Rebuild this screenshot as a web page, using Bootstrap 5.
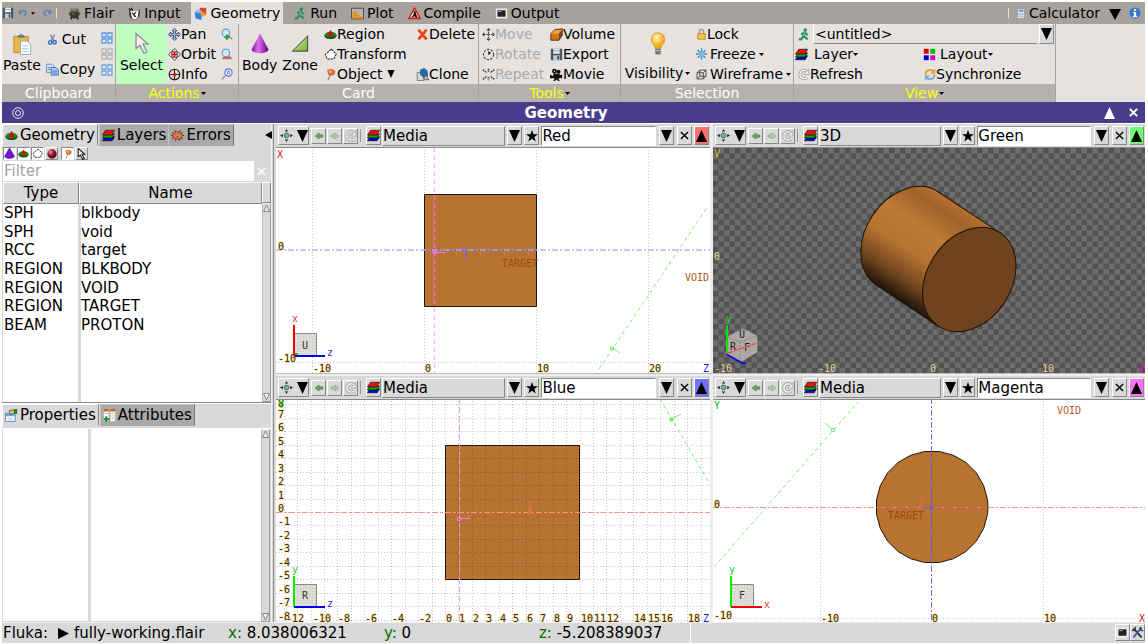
<!DOCTYPE html>
<html lang="en">
<head>
<meta charset="utf-8">
<meta name="viewport" content="width=device-width, initial-scale=1">
<title>Flair - Geometry</title>
<link href="https://cdn.jsdelivr.net/npm/bootstrap@5.3.0/dist/css/bootstrap.min.css" rel="stylesheet">
<style>
body{font-family:"DejaVu Sans",sans-serif;font-size:14px;line-height:20px;color:#000;background:#fff}
button,select,input{font:inherit;color:inherit;border-radius:0}
button{padding:0;border:0;background:transparent;white-space:nowrap;display:flex;align-items:center}
svg{display:block;flex:none}
.app{padding:2px 3px 1px 2px;height:100vh;min-height:480px;overflow:hidden}
.ic{width:13px;height:13px}
.menubar{background:#a6a29e;height:22px}
.menubar .tab{height:22px;padding:0 3px;gap:3px}
.menubar .tab.active{background:#e5e2e0}
.sep{width:1px;height:10px;background:#e5e2e0}
.ribbon{background:#e5e2e0;height:78px}
.grp{border-right:1px solid #a6a29e}
.grp-body{height:60px}
.grp-name{height:18px;background:#b5b1ad;color:#fff;line-height:19px;gap:1px;width:100%;justify-content:center}
.grp-name.menu{color:#ff0}
.g-clip{width:114px}.g-act{width:123px}.g-card{width:240px}.g-tool{width:142px}.g-sel{width:173px}.g-view{width:262px}
.big{flex-direction:column;justify-content:flex-start;padding-top:8px;line-height:20px}
.big>svg{height:23px}
.colm{display:flex;flex-direction:column}
.colm button{height:20px}
.two button{height:30px;gap:3px}
.off{color:#aaa}
.caret{width:5px;height:3px}
.tri{width:11px;height:12px}
.titlebar{background:#483d8b;color:#fff;height:21px;font-size:15px}
.sheet{background:#d9d9d9}
.side{width:270px;font-size:15px;border-right:1px solid #f4f4f4}
.stabs{height:23px}
.stabs button{height:22px;padding:0 2px;gap:2px;background:#a9a9a9;border:1px solid;border-color:#c4c4c4 #777 transparent #c4c4c4;margin-right:-1px}
.stabs button.active{background:#d9d9d9;border-color:#fff #888 transparent #fff;margin-right:1px}
.raise{background:#d9d9d9;border:1px solid;border-color:#fff #888 #888 #fff;justify-content:center}
.mini{width:13px;height:13px}
.mini.on{background:#fff;border-color:#888 #fff #fff #888}
.filter{height:20px;background:#fff;margin:1px 2px 1px 1px}
.filter input{border:0;padding:0 0 0 1px;outline:0;height:20px;line-height:20px}
.filter input::placeholder{color:#a3a3a3;opacity:1}
.filter button{width:15px;background:#d9d9d9;justify-content:center}
.listbox{background:linear-gradient(to right,transparent 75px,#d9d9d9 75px,#d9d9d9 78px,transparent 78px) #fff;margin-left:1px}
.cards{width:100%;height:152px;border-collapse:separate;border-spacing:0;table-layout:fixed}
.cards th{height:22px;font-weight:400;text-align:center;background:#d9d9d9;border:1px solid;border-color:#f8f8f8 #888 #888 #f8f8f8;padding:0;line-height:19px}
.cards td{padding:0 0 0 1px;line-height:18px}
.cards th:first-child,.cards td:first-child{width:76px}
.cards td:last-child{padding-left:2px}
.props{background:linear-gradient(to right,transparent 85px,#d9d9d9 85px,#d9d9d9 88px,transparent 88px) #fff;margin:0 0 1px 1px}
.sbar{width:9px;background:#d9d9d9;border:1px solid;border-color:#eee #999 #999 #bbb}
.sash{width:4px;background:linear-gradient(to right,#d9d9d9 1px,#8c8c8c 1px,#8c8c8c 2px,#d9d9d9 2px)}
.views{display:grid;grid-template-columns:434fr 432fr;grid-template-rows:249fr 246fr;column-gap:3px;row-gap:3px;background:linear-gradient(#bbb,#bbb) center/100% 1px no-repeat #eee;font-size:15px}
.pane{min-height:0;min-width:0}
.vbar{height:24px;background:#d9d9d9;border-bottom:1px solid #888;padding:0 1px 0 2px}
.vbar>.raise{width:15px;height:19px;margin-right:2px}
.vbar>.raise.small2{height:16px;width:15px;margin-right:1px}
.vbar .nav2{width:31px;gap:4px}
.vbar select{appearance:none;flex:125 1 0;min-width:0;height:20px;line-height:18px;background:#d9d9d9;border:1px solid;border-color:#fff #888 #888 #fff;padding:0;outline:0;margin-right:2px}
.vbar input{flex:116 1 0;min-width:0;height:20px;border:1px solid;border-color:#888 #fff #fff #888;padding:0;outline:0;background:#fff;margin-right:3px}
.plot{width:100%;flex:1 1 0;min-height:0}
.plot text{font:10px "DejaVu Sans Mono",monospace}
.ax text,text.ax{fill:#3c2c00;stroke:#f7dc96;stroke-width:1px;paint-order:stroke}
.axd text{fill:#e8cf96}
.dot{stroke:#c4c4c4;stroke-dasharray:1 2;fill:none}
.status{background:#d9d9d9;height:21px;font-size:15px;line-height:21px;border-top:1px solid #eee}
.status .lab{color:#007000}
.s1{width:226px}.s2{width:156px}.s3{width:155px}.s4{width:152px;border-right:1px solid #fff}
.viewname{border:0;outline:0;background:#e5e2e0;border-bottom:1px solid #888;border-left:1px solid #fff;width:226px;height:20px;padding:0 0 0 1px}
</style>
</head>
<body>
<svg width="0" height="0" class="position-absolute" aria-hidden="true">
<defs>
<linearGradient id="cone" x1="0" x2="1"><stop offset="0" stop-color="#7a10a0"/><stop offset=".4" stop-color="#e070f0"/><stop offset="1" stop-color="#600878"/></linearGradient>
<linearGradient id="zn" x1="0" x2="1" y2="1"><stop offset="0" stop-color="#e0f0b0"/><stop offset="1" stop-color="#70b030"/></linearGradient>
<radialGradient id="blb" cx=".4" cy=".3"><stop offset="0" stop-color="#fff8c0"/><stop offset="1" stop-color="#f4b020"/></radialGradient>
<radialGradient id="sphr" cx=".35" cy=".3"><stop offset="0" stop-color="#ffb0b0"/><stop offset=".5" stop-color="#b02840"/><stop offset="1" stop-color="#601020"/></radialGradient>
<linearGradient id="cyl" x1="0" x2="0" y2="1"><stop offset="0" stop-color="#b8702f"/><stop offset=".12" stop-color="#a0632b"/><stop offset=".35" stop-color="#c07a36"/><stop offset=".58" stop-color="#b87333"/><stop offset=".82" stop-color="#70461f"/><stop offset="1" stop-color="#20140a"/></linearGradient>
<pattern id="chk" x="713" y="148" width="11" height="11" patternUnits="userSpaceOnUse"><path fill="#6c6c6c" d="M0 0h11v11H0z"/><path fill="#535353" d="M0 0h5.500v5.500H0zM5.500 5.500H11V11H5.500z"/></pattern>
<pattern id="hat" width="3" height="3" patternUnits="userSpaceOnUse"><path fill="#e4e0dc" d="M0 0h3v3H0z"/><path fill="#c4c0bc" d="M0 0h1v1H0zM1.500 1.500h1v1h-1z"/></pattern>
<symbol id="save" viewBox="0 0 16 16"><path fill="#4a5868" d="M1 1h14v14H1z"/><path fill="#e8eef4" d="M4 1h8v6H4z"/><path fill="#8090a0" d="M4 3h8v1H4z"/><path fill="#c4ccd4" d="M4 9h8v6H4z"/><path fill="#303c48" d="M9 10h2v4H9z"/></symbol>
<symbol id="undo" viewBox="0 0 16 16"><path fill="none" stroke="#6080c0" stroke-width="3" d="M4 6c5-5 10-2 10 2 0 3-2 5-4 6"/><path fill="#6080c0" d="M0 4l8 0-4 8z"/></symbol>
<symbol id="redo" viewBox="0 0 16 16"><path fill="none" stroke="#6080c0" stroke-width="3" d="M12 6C7 1 2 4 2 8c0 3 2 5 4 6"/><path fill="#6080c0" d="M16 4l-8 0 4 8z"/></symbol>
<symbol id="pot" viewBox="0 0 16 16"><ellipse cx="8" cy="9" rx="6" ry="5" fill="#3c382c"/><path fill="#6c6448" d="M3 2h10v4H3z"/><path fill="#b0a468" d="M4 3h6v1H4zM5 8h3v1H5z"/><path stroke="#222" stroke-width="2" d="M4.500 12l-1 3M11.500 12l1 3"/><path stroke="#443c28" d="M1.500 6v3M14.500 6v3"/></symbol>
<symbol id="inp" viewBox="0 0 16 16"><path fill="#333" d="M1 3l4 3h7l3-4-1 10-4 3H5l-3-3z"/><path fill="#fff" d="M3 5h10l-1 8-3 2-4-1z"/><path fill="none" stroke="#222" stroke-width="1.500" d="M5 7l4 5M10 6c-4 3-3 6 0 6M1 2l3 2M4 1l2 4"/></symbol>
<symbol id="geo" viewBox="0 0 16 16"><path fill="#e04030" d="M7 1h8v9H7z"/><path fill="#3080e0" d="M1 6l9 2-1 8-7-2z"/><path fill="#80c0f8" d="M1 6l3-3 6 2v3z"/><circle cx="11" cy="9" r="3" fill="#f0a030"/></symbol>
<symbol id="run" viewBox="0 0 16 16"><circle cx="9" cy="2.500" r="2.200" fill="#2c9060"/><path fill="none" stroke="#2c9060" stroke-width="2.600" d="M8 5l-1 5 5 4M7 9l-3 5H1M4 8l4-3 4 4"/><path stroke="#90e0b0" d="M8 5l-1 5"/></symbol>
<symbol id="plt" viewBox="0 0 16 16"><path fill="#b8b4b0" stroke="#333" d="M.500 1.500h15v13H.500z"/><path fill="#e89020" d="M2 14V7l3-2 3 4 3 1 4 4z"/></symbol>
<symbol id="cmp" viewBox="0 0 16 16"><path fill="#fff" stroke="#d02020" stroke-width="2" d="M8 1.500L15 14H1z"/><path fill="#111" d="M7 5h2l1 4 2 4H9l-1-2-2 2H4l3-4z"/></symbol>
<symbol id="term" viewBox="0 0 16 16"><path fill="#f0f0f0" d="M1 2h14v12H1z"/><path fill="#222" d="M3 4h10v8H3z"/><path fill="#ccc" d="M4 5h4v1H4z"/></symbol>
<symbol id="calc" viewBox="0 0 16 16"><path fill="#f4f8fc" stroke="#8090a8" d="M2.500.500h11v15h-11z"/><path fill="#5090d8" d="M4 2h8v3H4z"/><path stroke="#7090b8" stroke-width="1.500" stroke-dasharray="2 1" d="M4 7.500h8M4 10h8M4 12.500h8"/></symbol>
<symbol id="info" viewBox="0 0 16 16"><circle cx="8" cy="8" r="7.500" fill="#3878c8"/><path fill="#fff" d="M6.500 2.500h3v2.500h-3zM5.500 6.500h4V12h1.500v1.500h-6V12h1.500V8H5.500z"/></symbol>
<symbol id="paste" viewBox="0 0 20 24"><path fill="#e8b84c" stroke="#b88828" d="M1.500 4.500h15v17h-15z"/><path fill="#777" d="M5 6l1-3h2l1-2 1 2h2l1 3z"/><path fill="#fff" stroke="#98a8b8" d="M8.500 9.500h7l3.500 3.500v10.500H8.500z"/><path stroke="#a8c0e0" d="M10 14.500h7M10 17.500h7M10 20.500h7"/></symbol>
<symbol id="cut" viewBox="0 0 16 16"><path stroke="#7888a0" stroke-width="2" d="M5 1l5 9M11 1l-5 9"/><circle cx="4.500" cy="12.500" r="2.500" fill="none" stroke="#3068c0" stroke-width="2"/><circle cx="11" cy="12" r="2.500" fill="none" stroke="#3068c0" stroke-width="2"/></symbol>
<symbol id="copy" viewBox="0 0 16 16"><path fill="#d8e8ff" stroke="#5878c0" d="M.500 1.500h7l2 2v8h-9z"/><path fill="#a8c4f4" stroke="#4068b8" d="M6.500 5.500h6l3 3v6.500h-9z"/><path stroke="#4068b8" d="M2 5.500h4M2 8h4M8 10h6M8 12.500h6"/></symbol>
<symbol id="sq4" viewBox="0 0 12 12"><path fill="#fff" fill-opacity=".5" stroke="currentColor" stroke-width="1.300" d="M1 1h4v4H1zM7 1h4v4H7zM1 7h4v4H1zM7 7h4v4H7z"/></symbol>
<symbol id="ptr" viewBox="0 0 16 22"><path fill="#eee" stroke="#888" stroke-width="1.200" d="M2 1v15l4-3 4 8 3-1.500-4-8h5z"/></symbol>
<symbol id="ptr2" viewBox="0 0 16 22"><path fill="#fff" stroke="#222" stroke-width="2" d="M2 1v15l4-3 4 8 3-1.500-4-8h5z"/></symbol>
<symbol id="pan" viewBox="0 0 16 16"><path fill="#a8d0f0" stroke="#203860" d="M8 .500l3 3H9v3.500h3.500V5l3 3-3 3V9H9v3.500h2l-3 3-3-3h2V9H3.500v2l-3-3 3-3v2H7V3.500H5z"/></symbol>
<symbol id="orb" viewBox="0 0 16 16"><ellipse cx="8" cy="8" rx="7" ry="3.500" fill="none" stroke="#333"/><ellipse cx="8" cy="8" rx="3.500" ry="7" fill="none" stroke="#333"/><path stroke="#e01010" stroke-width="2" d="M8 4.500v7M4.500 8h7"/></symbol>
<symbol id="inf2" viewBox="0 0 16 16"><circle cx="8" cy="8" r="6.500" fill="none" stroke="#222" stroke-width="1.400"/><path stroke="#222" stroke-width="1.500" d="M8 1v14M1 8h14"/><path stroke="#e01010" stroke-width="2.500" d="M8 6v4M6 8h4"/></symbol>
<symbol id="mag" viewBox="0 0 16 16"><path stroke="#8090a0" stroke-width="2" d="M10 10l5 5"/><circle cx="6.500" cy="6.500" r="5" fill="#d0e8fa" stroke="#6898d0" stroke-width="1.500"/></symbol>
<symbol id="mag2" viewBox="0 0 16 16"><path stroke="#8898a8" stroke-width="2" d="M6 10l-5 5"/><circle cx="10" cy="6" r="4.800" fill="#eef" stroke="#5070d0" stroke-width="1.500"/><path fill="none" stroke="#5070d0" d="M8.500 4.500h3v3h-3z"/></symbol>
<symbol id="body" viewBox="0 0 18 20"><path fill="url(#cone)" d="M9 0l8.500 16c-1 5-16 5-17 0z"/></symbol>
<symbol id="zone" viewBox="0 0 20 20"><path fill="url(#zn)" stroke="#333" d="M18.500 1.500v17h-17z"/></symbol>
<symbol id="reg" viewBox="0 0 16 16"><ellipse cx="8" cy="9" rx="7.500" ry="4.500" fill="#1c8c1c"/><path fill="#0c500c" d="M.500 9c0 6 15 6 15 0-2 3-13 3-15 0z"/><path fill="#c01818" d="M8 2l4 7c-1 2-7 2-8 0z"/></symbol>
<symbol id="trf" viewBox="0 0 16 16"><path fill="#fff" stroke="#222" stroke-width="1.300" stroke-dasharray="3 1" d="M9 1.500l6 6-3 6H4L1.500 8z"/></symbol>
<symbol id="pin" viewBox="0 0 16 16"><path stroke="#888" stroke-width="1.500" d="M5 15l2-5"/><path fill="#e06828" d="M4 2l6-1 4 3-1 4-5 2-3-2z"/><path fill="#f8b080" d="M6 3h4v3H6z"/></symbol>
<symbol id="del" viewBox="0 0 16 16"><path stroke="#e84818" stroke-width="3.500" d="M3 2l10 12M13 2L3 14"/></symbol>
<symbol id="cln" viewBox="0 0 16 16"><path fill="#d8d8d8" stroke="#666" d="M1.500 5.500h8v10h-8z"/><path fill="#2868a0" d="M5 2l5-2 4 3 1 7-6 2-4-4z"/><path fill="#b8b8b8" stroke="#555" d="M9.500 10.500l4-1 2 5h-5z"/></symbol>
<symbol id="rot" viewBox="0 0 16 16"><circle cx="8" cy="8" r="6.300" fill="none" stroke="#444" stroke-width="1.400" stroke-dasharray="3 1.500"/><path stroke="#444" d="M8 4v4l3-2"/></symbol>
<symbol id="mov" viewBox="0 0 16 16"><path fill="none" stroke="#444" stroke-width="1.400" d="M6 3l2-2 2 2M6 13l2 2 2-2M3 6L1 8l2 2M13 6l2 2-2 2"/><path stroke="#444" stroke-width="1.400" stroke-dasharray="2 1" d="M8 2v12M2 8h12"/></symbol>
<symbol id="rep" viewBox="0 0 16 16"><path stroke="#444" stroke-width="2" stroke-dasharray="2 1" d="M1 2l5 4M15 2l-5 4M1 14l5-4M15 14l-5-4M8 1v4M8 11v4"/></symbol>
<symbol id="vol" viewBox="0 0 16 16"><path fill="#d07818" stroke="#402000" d="M1 7l5-5 9-1v8l-4 6H1z"/><path fill="#f0a040" d="M1.500 7l5-4.500 8-.500-3.500 5z"/><path fill="#804008" d="M11 7l4-5v7l-4 6z"/></symbol>
<symbol id="film" viewBox="0 0 16 16"><circle cx="5.500" cy="4" r="3" fill="#111"/><circle cx="10.500" cy="4.500" r="2.500" fill="#111"/><path fill="#111" d="M4 7h8v6H4zM0 8l4 2v2l-4 1zM12 9l3-1v5l-3-1zM4 16l2-3h4l2 3h-2l-2-2-2 2z"/><circle cx="5.500" cy="4" r="1" fill="#ddd"/></symbol>
<symbol id="bulb" viewBox="0 0 16 24"><path fill="url(#blb)" stroke="#d89010" stroke-width=".800" d="M8 1c5 0 7 3.500 7 7 0 4-4 5-4 9H5c0-4-4-5-4-9 0-3.500 2-7 7-7z"/><path fill="#777" d="M5 17.500h6V22l-1 1.500H6L5 22z"/><path stroke="#ccc" d="M5 19.500h6"/></symbol>
<symbol id="lock" viewBox="0 0 16 16"><path fill="none" stroke="#999" stroke-width="2" d="M5 8V5c0-5 6-5 6 0v3"/><path fill="#f0b830" stroke="#b88010" d="M2.500 7.500h11v8h-11z"/><path stroke="#fde8a0" d="M4 10h8M4 13h8"/></symbol>
<symbol id="frz" viewBox="0 0 16 16"><path stroke="#3c88c0" stroke-width="2" d="M8 0v16M0 8h16M2.500 2.500l11 11M13.500 2.500l-11 11"/><circle cx="8" cy="8" r="4.500" fill="#78b8e0"/></symbol>
<symbol id="wir" viewBox="0 0 16 16"><path fill="none" stroke="#333" stroke-width="1.200" d="M1.500 5.500h9v9h-9zM5.500 1.500h9v9h-9zM1.500 5.500l4-4M10.500 5.500l4-4M10.500 14.500l4-4M1.500 14.500l4-4"/></symbol>
<symbol id="lay" viewBox="0 0 16 16"><path fill="#00c" stroke="#000" stroke-width=".700" d="M.500 14.500l3-5h12l-3 5z"/><path fill="#0a0" stroke="#000" stroke-width=".700" d="M.500 11l3-5h12l-3 5z"/><path fill="#e81010" stroke="#000" stroke-width=".700" d="M.500 7.500l4-6h11l-3 6z"/></symbol>
<symbol id="lout" viewBox="0 0 16 16"><path fill="#d00" d="M1 1h6v6H1z"/><path fill="#0b0" d="M9 1h6v6H9z"/><path fill="#00c" d="M1 9h6v6H1z"/><path fill="#c0c" d="M9 9h6v6H9z"/></symbol>
<symbol id="rfr" viewBox="0 0 16 16"><path fill="none" stroke="#999" stroke-width="4" d="M12.500 4.500C8 0 2.500 4 2.500 8c0 5 6 7 9.500 4"/><path fill="none" stroke="#f4f4f4" stroke-width="2" d="M12.500 4.500C8 0 2.500 4 2.500 8c0 5 6 7 9.500 4"/><path fill="#f4f4f4" stroke="#999" d="M14.500 1v7h-7z"/></symbol>
<symbol id="syn" viewBox="0 0 16 16"><path fill="none" stroke="#e8a020" stroke-width="2.600" d="M2 8c0-6 7-8 11-4"/><path fill="#e8a020" d="M15 0v7H8z"/><path fill="none" stroke="#88a8c8" stroke-width="2.600" d="M14 8c0 6-7 8-11 4"/><path fill="#88a8c8" d="M1 16V9h7z"/></symbol>
<symbol id="bug" viewBox="0 0 16 16"><path stroke="#702810" d="M1 4l14 9M1 12l14-8M4 1l2 3M12 1l-2 3M5 15l1-3M11 15l-1-3M0 8h16"/><ellipse cx="8" cy="8" rx="6" ry="4.500" fill="#e08058" stroke="#702810"/><path fill="#702810" d="M5 6h1v1H5zM9 6h1v1H9zM7 9h2v1H7z"/></symbol>
<symbol id="cone2" viewBox="0 0 16 16"><path fill="#7a10e0" stroke="#301060" d="M8 0l7 12c-1 4-13 4-14 0z"/></symbol>
<symbol id="ball" viewBox="0 0 16 16"><circle cx="8" cy="8" r="7.500" fill="url(#sphr)"/></symbol>
<symbol id="prp" viewBox="0 0 16 16"><path fill="#fff" stroke="#3878c8" d="M.500 5.500h12v10H.500z"/><path fill="#68a8e8" d="M1 6h11v3H1z"/><path fill="#e8c060" stroke="#604010" stroke-width=".800" d="M5 2l6-1 1 4-5 2z"/><path fill="#288040" d="M11 0h4v6h-4z"/><path stroke="#a8c0d8" d="M3 11.500h7M3 13.500h7"/></symbol>
<symbol id="att" viewBox="0 0 16 16"><path fill="#fff" stroke="#bbb" stroke-width=".500" d="M1 1h6v14H1zM9 1h6v14H9z"/><path fill="#d06020" d="M1 0h6v3H1zM9 0h6v3H9z"/><path stroke="#b0b0a0" d="M2 5.500h4M10 5.500h4M10 8.500h4M10 11.500h4"/><path stroke="#188828" stroke-width="2.500" d="M4 9v7M1 12.500h7"/></symbol>
<symbol id="ctr" viewBox="0 0 16 16"><circle cx="8" cy="8" r="3" fill="#68b0c0" stroke="#286070"/><path fill="#223" d="M8 0l2 3.500H6zM8 16l2-3.500H6zM0 8l3.500-2v4zM16 8l-3.500-2v4z"/><path fill="#e8c020" d="M7 3h2v2H7zM7 11h2v2H7z"/></symbol>
<symbol id="bk" viewBox="0 0 16 16"><path fill="#70a868" stroke="#507848" d="M3 8l5-4v2.500h5v3H8V12z"/></symbol>
<symbol id="fw" viewBox="0 0 16 16"><path fill="#b8d0b0" stroke="#88a080" d="M13 8L8 4v2.500H3v3h5V12z"/></symbol>
<symbol id="tls" viewBox="0 0 16 16"><path stroke="#333" stroke-width="2.500" d="M3 3l10 11"/><path stroke="#4060a0" stroke-width="2.500" d="M13 2L3 14"/><path fill="none" stroke="#333" stroke-width="1.500" d="M1 5c3 2 5-1 4-4M11 1l1 4 3 1"/></symbol>
<symbol id="car" viewBox="0 0 5 3"><path d="M0 0h5L2.500 3z"/></symbol>
<symbol id="dn" viewBox="0 0 11 12"><path d="M0 0h11L5.500 12z"/></symbol>
<symbol id="up" viewBox="0 0 11 12"><path d="M0 12h11L5.500 0z"/></symbol>
<symbol id="xx" viewBox="0 0 10 10"><path stroke="currentColor" stroke-width="1.500" d="M1 1l8 8M9 1L1 9"/></symbol>
<symbol id="star" viewBox="0 0 12 12"><path d="M6 0l1.500 4.300H12L8.400 7l1.300 4.500L6 8.800 2.300 11.500 3.600 7 0 4.300h4.500z"/></symbol>
</defs>
</svg>
<div class="app d-flex flex-column">
<nav class="menubar d-flex align-items-center" aria-label="Main">
  <button aria-label="Save"><svg width="12" height="12"><use href="#save"/></svg></button>
  <button aria-label="Undo" class="ms-1"><svg width="9" height="10"><use href="#undo"/></svg></button>
  <button aria-label="Undo list" class="ms-1"><svg class="caret" style="width:4px"><use href="#car"/></svg></button>
  <button aria-label="Redo" class="ms-2"><svg width="9" height="10"><use href="#redo"/></svg></button>
  <span class="sep ms-1"></span>
  <div class="d-flex ms-1 ps-1" style="gap:8px">
    <button class="tab"><svg class="ic"><use href="#pot"/></svg>Flair</button>
    <button class="tab"><svg class="ic"><use href="#inp"/></svg>Input</button>
    <button class="tab active"><svg class="ic"><use href="#geo"/></svg>Geometry</button>
    <button class="tab"><svg class="ic"><use href="#run"/></svg>Run</button>
    <button class="tab"><svg class="ic"><use href="#plt"/></svg>Plot</button>
    <button class="tab"><svg class="ic"><use href="#cmp"/></svg>Compile</button>
    <button class="tab"><svg class="ic"><use href="#term"/></svg>Output</button>
  </div>
  <span class="sep ms-auto me-1"></span>
  <button class="tab"><svg class="ic" style="width:10px"><use href="#calc"/></svg>Calculator</button>
  <button aria-label="More tools" style="margin:3px 8px 0 6px"><svg width="12" height="11" viewBox="0 0 12 11"><path d="M0 0h12L6 11z"/></svg></button>
  <button aria-label="About" class="me-1"><svg width="12" height="12"><use href="#info"/></svg></button>
</nav>
<div class="ribbon d-flex">
  <section class="grp g-clip">
    <div class="grp-body d-flex">
      <button class="big" style="padding-left:1px"><svg width="20"><use href="#paste"/></svg>Paste</button>
      <div class="colm two" style="padding-left:5px"><button><svg class="ic" style="height:11px"><use href="#cut"/></svg>Cut</button><button style="gap:1px"><svg class="ic"><use href="#copy"/></svg>Copy</button></div>
      <div class="colm ms-auto pt-2 gap-1" style="margin-right:2px">
        <svg width="12" height="12" color="#5a98e0"><use href="#sq4"/></svg><svg width="12" height="12" color="#b4b4b4"><use href="#sq4"/></svg><svg width="12" height="12" color="#70a4dc"><use href="#sq4"/></svg></div>
    </div>
    <div class="grp-name d-flex">Clipboard</div>
  </section>
  <section class="grp g-act">
    <div class="grp-body d-flex">
      <button class="big" style="width:51px;background:#c0ffc0"><svg width="16"><use href="#ptr"/></svg>Select</button>
      <div class="colm" style="padding-left:1px"><button><svg class="ic"><use href="#pan"/></svg>Pan</button><button><svg class="ic"><use href="#orb"/></svg>Orbit</button><button><svg class="ic"><use href="#inf2"/></svg>Info</button></div>
      <div class="colm ms-auto" style="padding-right:5px"><button aria-label="Zoom in"><svg width="12" height="12" viewBox="0 0 16 16"><use href="#mag"/><path stroke="#30a040" stroke-width="3" d="M8 8.500v7M4.500 12h7"/></svg></button><button aria-label="Zoom out"><svg width="12" height="12" viewBox="0 0 16 16"><use href="#mag"/><path stroke="#d06850" stroke-width="3" d="M2 13.500h11"/></svg></button><button aria-label="Zoom region"><svg width="12" height="12"><use href="#mag2"/></svg></button></div>
    </div>
    <button class="grp-name menu">Actions<svg class="caret"><use href="#car"/></svg></button>
  </section>
  <section class="grp g-card">
    <div class="grp-body d-flex">
      <button class="big" style="margin-left:3px"><svg width="18"><use href="#body"/></svg>Body</button>
      <button class="big" style="margin-left:5px"><svg width="18"><use href="#zone"/></svg>Zone</button>
      <div class="colm" style="width:98px;padding-left:6px"><button><svg class="ic"><use href="#reg"/></svg>Region</button><button><svg class="ic"><use href="#trf"/></svg>Transform</button><button><svg class="ic"><use href="#pin"/></svg>Object<svg class="ms-1" width="8" height="8"><use href="#dn"/></svg></button></div>
      <div class="colm"><button><svg class="ic"><use href="#del"/></svg>Delete</button><button aria-label="Empty" disabled></button><button><svg class="ic"><use href="#cln"/></svg>Clone</button></div>
    </div>
    <div class="grp-name d-flex">Card</div>
  </section>
  <section class="grp g-tool">
    <div class="grp-body d-flex">
      <div class="colm" style="width:68px;margin-left:3px"><button class="off"><svg class="ic"><use href="#mov"/></svg>Move</button><button class="off"><svg class="ic"><use href="#rot"/></svg>Rotate</button><button class="off"><svg class="ic"><use href="#rep"/></svg>Repeat</button></div>
      <div class="colm"><button><svg class="ic"><use href="#vol"/></svg>Volume</button><button><svg class="ic"><use href="#save"/></svg>Export</button><button><svg class="ic"><use href="#film"/></svg>Movie</button></div>
    </div>
    <button class="grp-name menu">Tools<svg class="caret"><use href="#car"/></svg></button>
  </section>
  <section class="grp g-sel">
    <div class="grp-body d-flex">
      <button class="big" style="width:71px;padding-left:2px"><svg width="16" style="margin-bottom:8px"><use href="#bulb"/></svg><span class="d-flex align-items-center">Visibility<svg class="caret" style="margin-left:2px"><use href="#car"/></svg></span></button>
      <div class="colm ps-1"><button><svg width="11" height="12"><use href="#lock"/></svg>Lock</button><button style="gap:3px"><svg width="11" height="12"><use href="#frz"/></svg><span>Freeze</span><svg class="caret"><use href="#car"/></svg></button><button style="gap:3px"><svg width="11" height="11"><use href="#wir"/></svg><span>Wireframe</span><svg class="caret"><use href="#car"/></svg></button></div>
    </div>
    <div class="grp-name d-flex">Selection</div>
  </section>
  <section class="grp g-view">
    <div class="grp-body">
      <div class="d-flex align-items-center"><svg class="ic ms-1" style="margin-right:2px"><use href="#run"/></svg><input class="viewname flex-grow-1" aria-label="View name" value="&lt;untitled&gt;"><button class="raise" aria-label="View list" style="width:15px;height:20px;margin:0 1px 0 2px"><svg class="tri"><use href="#dn"/></svg></button></div>
      <div class="d-flex"><div class="colm" style="width:128px;padding-left:1px"><button><svg class="ic"><use href="#lay"/></svg><span style="padding-left:6px">Layer</span><svg class="caret"><use href="#car"/></svg></button><button style="padding-left:3px"><svg class="ic" style="width:12px"><use href="#rfr"/></svg>Refresh</button></div>
      <div class="colm ps-1"><button style="margin-left:-3px"><svg class="ic"><use href="#lout"/></svg><span class="ps-1">Layout</span><svg class="caret"><use href="#car"/></svg></button><button style="margin-left:-2px"><svg class="ic" style="width:12px"><use href="#syn"/></svg>Synchronize</button></div></div>
    </div>
    <button class="grp-name menu">View<svg class="caret"><use href="#car"/></svg></button>
  </section>
</div>
<header class="titlebar d-flex align-items-center">
  <button aria-label="Pin" style="margin-left:10px"><svg width="12" height="12" viewBox="0 0 12 12" fill="none" stroke="#e8e4ff"><circle cx="6" cy="6" r="5.300"/><circle cx="6" cy="6" r="2.500"/></svg></button>
  <span class="fw-bold flex-grow-1 text-center ps-1">Geometry</span>
  <button aria-label="Maximize"><svg class="tri" fill="#fff"><use href="#up"/></svg></button>
  <button aria-label="Close" style="margin:0 7px 0 14px"><svg width="9" height="9" viewBox="0 0 10 10"><path stroke="#fff" stroke-width="2.200" d="M1 1l8 8M9 1L1 9"/></svg></button>
</header>
<main class="d-flex flex-grow-1 sheet" style="min-height:0;margin-top:1px">
  <aside class="side d-flex flex-column flex-shrink-0">
    <div class="d-flex flex-column" style="flex:280 1 0;min-height:0">
      <div class="stabs d-flex"><button class="active"><svg class="ic"><use href="#reg"/></svg>Geometry</button><button><svg class="ic"><use href="#lay"/></svg>Layers</button><button><svg class="ic"><use href="#bug"/></svg>Errors</button><button aria-label="Collapse" class="ms-auto bg-transparent border-0 p-0"><svg width="7" height="8" viewBox="0 0 7 8"><path d="M7 0v8L0 4z"/></svg></button></div>
      <div class="d-flex" style="gap:1px;padding-left:1px">
        <button class="raise mini on" aria-label="Bodies"><svg width="11" height="11"><use href="#cone2"/></svg></button><button class="raise mini on" aria-label="Regions"><svg width="11" height="11"><use href="#reg"/></svg></button><button class="raise mini on" aria-label="Transforms"><svg width="11" height="11"><use href="#trf"/></svg></button><button class="raise mini" aria-label="Materials"><svg width="10" height="10"><use href="#ball"/></svg></button><button class="raise mini on" aria-label="Objects" style="margin-left:2px"><svg width="10" height="10"><use href="#pin"/></svg></button><button class="raise mini" aria-label="Select"><svg width="9" height="12"><use href="#ptr2"/></svg></button></div>
      <div class="filter d-flex"><input class="flex-grow-1" placeholder="Filter" aria-label="Filter" style="min-width:0"><button aria-label="Clear" class="text-white"><svg width="9" height="9"><use href="#xx"/></svg></button></div>
      <div class="d-flex flex-grow-1" style="min-height:0">
        <div class="listbox flex-grow-1">
          <table class="cards"><thead><tr><th scope="col">Type</th><th scope="col">Name</th></tr></thead>
          <tbody><tr><td>SPH</td><td>blkbody</td></tr><tr><td>SPH</td><td>void</td></tr><tr><td>RCC</td><td>target</td></tr><tr><td>REGION</td><td>BLKBODY</td></tr><tr><td>REGION</td><td>VOID</td></tr><tr><td>REGION</td><td>TARGET</td></tr><tr><td>BEAM</td><td>PROTON</td></tr></tbody></table>
        </div>
        <div class="d-flex flex-column"><div class="raise" style="height:21px;width:9px"></div><div class="sbar flex-grow-1 d-flex flex-column justify-content-between"><svg width="7" height="8" viewBox="0 0 7 8"><path fill="#eee" stroke="#888" d="M.500 7.500h6L3.500 1z"/></svg><svg width="7" height="8" viewBox="0 0 7 8"><path fill="#eee" stroke="#888" d="M.500.500h6L3.500 7z"/></svg></div></div>
      </div>
    </div>
    <div style="height:2px;border-top:1px solid #888;background:#fff"></div>
    <div class="d-flex flex-column" style="flex:219 1 0;min-height:0">
      <div class="stabs d-flex" style="height:24px"><button class="active"><svg class="ic"><use href="#prp"/></svg>Properties</button><button><svg class="ic"><use href="#att"/></svg>Attributes</button></div>
      <div class="d-flex flex-grow-1 border-top border-white"><div class="props flex-grow-1"></div><div class="sbar d-flex flex-column justify-content-between" style="margin-right:1px"><svg width="7" height="8" viewBox="0 0 7 8"><path fill="#eee" stroke="#888" d="M.500 7.500h6L3.500 1z"/></svg><svg width="7" height="8" viewBox="0 0 7 8"><path fill="#eee" stroke="#888" d="M.500.500h6L3.500 7z"/></svg></div></div>
    </div>
  </aside>
  <div class="sash flex-shrink-0"></div>
  <div class="views flex-grow-1">
    <section class="pane d-flex flex-column">
      <div class="vbar d-flex align-items-center" data-view="Red" data-kind="Media" data-color="#ff7070"></div>
      <svg class="plot" viewBox="276 148 434 225" preserveAspectRatio="xMidYMid slice">
        <path fill="#fff" d="M0 0h1200v700H0z"/>
        <path class="dot" d="M312.500 147v226M424.500 147v226M536.500 147v226M648.500 147v226M276 362.500h434"/>
        <path fill="#b87333" stroke="#221408" d="M424.500 194.500h112v112h-112z"/>
        <path stroke="#b4b4fa" stroke-width="1.500" stroke-dasharray="6 2 2 2" d="M276 250h434"/>
        <path stroke="#7878d0" stroke-dasharray="6 2 2 2" d="M425 250h111"/>
        <path stroke="#ffb4ff" stroke-width="1.300" stroke-dasharray="5 3" d="M434.500 147v226"/>
        <path stroke="#f060c8" stroke-width="1.300" stroke-dasharray="5 3" d="M434.500 195v111"/>
        <path fill="none" stroke="#ff70ff" d="M433 250.500h3v3h-3zM436 252.500h9"/><path fill="none" stroke="#7070ff" d="M462.500 248.500h3v3h-3zM464.500 252v8"/>
        <path fill="none" stroke="#80f080" stroke-dasharray="4 3" d="M599 369L708 206"/><path fill="none" stroke="#70f070" d="M610.500 347h3v3h-3zM613 348l7 5"/>
        <text x="502" y="267" fill="#9c4c10">TARGET</text><text x="685" y="281" fill="#a85820">VOID</text>
        <text x="277" y="158" fill="#c02020">X</text>
        <g class="ax"><text x="278" y="250">0</text><text x="278" y="362">-10</text><text x="313" y="372">-10</text><text x="425" y="372">0</text><text x="537" y="372">10</text><text x="649" y="372">20</text></g>
        <text x="703" y="372" fill="#1818c0" font-weight="bold">Z</text>
        <path fill="url(#hat)" stroke="#888" d="M294.500 333.500h22v22h-22z"/><text x="302" y="349" fill="#333">U</text>
        <path stroke="#f00000" stroke-width="2" d="M294 325v31"/><path stroke="#0000f0" stroke-width="2" d="M295 356h30"/><path stroke="#0c0" stroke-width="2" d="M295 354h3"/>
        <text x="292" y="322" fill="#f03030">x</text><text x="327" y="356" fill="#3030f0">z</text>
      </svg>
    </section>
    <section class="pane d-flex flex-column">
      <div class="vbar d-flex align-items-center" data-view="Green" data-kind="3D" data-color="#70ff70"></div>
      <svg class="plot" viewBox="713 148 432 225" preserveAspectRatio="xMidYMid slice">
        <path fill="url(#chk)" d="M600 100h700v400H600z"/>
        <g transform="translate(969.3 279.5) rotate(33.500)" stroke="#1c1208"><path fill="url(#cyl)" d="M0-56H-74A42 56 0 0 0-74 56H0z"/><ellipse rx="42" ry="56" fill="#6e431d"/></g>
        <text x="714" y="157" fill="#c8c020">V</text><text x="1139" y="372" fill="#c000c0">U</text>
        <g class="axd"><text x="714" y="260">0</text><text x="714" y="372">-10</text><text x="818" y="372">-10</text><text x="930" y="372">0</text><text x="1042" y="372">10</text></g>
        <path fill="#aca8a4" stroke="#bbb" stroke-width=".500" d="M727 337l16-8 14 7v16l-15 9-15-6z"/><path fill="none" stroke="#8c8884" stroke-dasharray="2 1" d="M727 337l13 5 17-6M740 342v19"/>
        <text x="739" y="338" fill="#222">U</text><text x="730" y="350" fill="#222">R</text><text x="744" y="351" fill="#222">F</text>
        <path stroke="#10e010" stroke-width="2" d="M727 325v28"/><path stroke="#ff4848" stroke-width="1.500" stroke-dasharray="5 1" d="M728 353l29-10"/><path fill="none" stroke="#1010e0" stroke-width="2" d="M726 354l16 9h4"/>
        <text x="726" y="322" fill="#10d010">y</text>
      </svg>
    </section>
    <section class="pane d-flex flex-column">
      <div class="vbar d-flex align-items-center" data-view="Blue" data-kind="Media" data-color="#7070ff"></div>
      <svg class="plot" viewBox="276 400 434 222" preserveAspectRatio="xMidYMid slice">
        <path fill="#fff" d="M0 0h1200v700H0z"/>
        <path fill="#b87333" stroke="#221408" d="M445.500 445.500h134v134h-134z"/>
        <g id="blueGrid"></g>
        <path stroke="#ff9090" stroke-dasharray="6 2 3 2" d="M276 512.500h434"/><path stroke="#f0a0f0" stroke-dasharray="6 3" d="M459.500 398v225"/>
        <path stroke="#e08880" stroke-dasharray="6 3" d="M459.500 446v133"/>
        <path fill="none" stroke="#ff70ff" d="M457.500 517.500h3v3h-3zM461 518.500h9"/><path fill="#e86050" stroke="#f07060" d="M528.500 510.500h3v3h-3zM530 510v-9"/>
        <path fill="none" stroke="#80f080" stroke-dasharray="4 3" d="M660 399l48 82"/><path fill="#70f070" stroke="#70f070" d="M670 418h3v3h-3zM673 418l8-4"/>
        <g class="ax" id="blueLabels"></g><text x="278" y="408" fill="#00c000">Y</text>
        <text x="703" y="622" fill="#1818c0" font-weight="bold">Z</text>
        <path fill="url(#hat)" stroke="#888" d="M294.500 584.500h22v22h-22z"/><text x="302" y="599" fill="#333">R</text>
        <path stroke="#00f000" stroke-width="2" d="M294 576v31"/><path stroke="#0000f0" stroke-width="2" d="M294 607h31"/>
        <text x="292" y="573" fill="#20d020">y</text><text x="327" y="607" fill="#3030f0">z</text>
      </svg>
    </section>
    <section class="pane d-flex flex-column">
      <div class="vbar d-flex align-items-center" data-view="Magenta" data-kind="Media" data-color="#ff70ff"></div>
      <svg class="plot" viewBox="713 400 432 222" preserveAspectRatio="xMidYMid slice">
        <path fill="#fff" d="M600 300h700v400H600z"/>
        <path class="dot" d="M820.500 398v225M1043.500 398v225M712 618.500h433"/>
        <path fill="#b87333" stroke="#221408" transform="translate(932 507)" d="M56 0l-.500 7.300-3.800 14.100-7.300 12.700-10.300 10.300-12.700 7.300-14.100 3.800H-7.300l-14.100-3.800-12.700-7.300-10.300-10.300-7.300-12.700-3.800-14.100V-7.300l3.800-14.100 7.300-12.700 10.300-10.300 12.700-7.300 14.100-3.800H7.300l14.100 3.800 12.700 7.300 10.300 10.300 7.300 12.700 3.800 14.100z"/>
        <path stroke="#f89090" stroke-dasharray="6 2 2 2" d="M712 507.500h433"/><path stroke="#6c6cf0" stroke-dasharray="6 2 2 2" d="M931.500 398v225"/>
        <path stroke="#d86850" d="M876 507.500h111" stroke-dasharray="6 2 2 2"/><path stroke="#7060a0" stroke-dasharray="6 2 2 2" d="M931.500 452v110"/>
        <path fill="#e86050" stroke="#f06058" d="M920 506.500h2v2h-2zM921.500 506v-10"/><path fill="#5050ff" stroke="#6868d8" d="M930 506.500h3v2h-3zM922 507.500h8"/>
        <path fill="none" stroke="#80f080" stroke-dasharray="4 3" d="M714 567L858 402"/><path fill="none" stroke="#70f070" d="M831.500 428.500h3v3h-3zM831 428l-6-5"/>
        <text x="888" y="519" fill="#9c4c10">TARGET</text><text x="1057" y="414" fill="#b05c28">VOID</text>
        <text x="714" y="409" fill="#00c000">Y</text><text x="1139" y="622" fill="#d02020">X</text>
        <g class="ax"><text x="714" y="508">0</text><text x="714" y="619">-10</text><text x="821" y="622">-10</text><text x="932" y="622">0</text><text x="1044" y="622">10</text></g>
        <path fill="url(#hat)" stroke="#888" d="M731.500 584.500h22v22h-22z"/><text x="739" y="599" fill="#333">F</text>
        <path stroke="#00f000" stroke-width="2" d="M731 576v31"/><path stroke="#f00000" stroke-width="2" d="M731 607h31"/>
        <text x="729" y="573" fill="#20d020">y</text><text x="764" y="608" fill="#f03030">x</text>
      </svg>
    </section>
  </div>
</main>
<footer class="status d-flex">
  <div class="s1 d-flex align-items-center" style="padding-left:1px">Fluka:<svg width="11" height="11" viewBox="0 0 11 11" style="margin:0 5px 0 10px"><path d="M0 0v11l11-5.500z"/></svg>fully-working.flair</div>
  <div class="s2"><span class="lab">x:</span> 8.038006321</div>
  <div class="s3"><span class="lab">y:</span> 0</div>
  <div class="s4"><span class="lab">z:</span> -5.208389037</div>
  <button class="raise ms-auto" aria-label="Console" style="width:15px;height:17px;margin-top:1px"><svg class="ic"><use href="#term"/></svg></button>
  <button class="raise" aria-label="Settings" style="width:15px;height:17px;margin-top:1px"><svg class="ic"><use href="#tls"/></svg></button>
</footer>
</div>
<script>
// Every viewport has the same toolbar; only name, projection and colour differ.
document.querySelectorAll('.vbar').forEach(bar => {
  const {view, kind, color} = bar.dataset;
  bar.innerHTML = `
    <button class="raise nav2" aria-label="${view} projection"><svg class="ic"><use href="#ctr"/></svg><svg class="tri"><use href="#dn"/></svg></button>
    <button class="raise small2" aria-label="Back"><svg width="12" height="12"><use href="#bk"/></svg></button>
    <button class="raise small2" aria-label="Forward"><svg width="12" height="12"><use href="#fw"/></svg></button>
    <button class="raise small2" aria-label="Refresh"><svg width="12" height="12"><use href="#rfr"/></svg></button>
    <span style="width:1px;height:13px;background:#999;margin:0 5px 0 1px"></span>
    <button class="raise" aria-label="Layer" style="margin-right:1px"><svg class="ic"><use href="#lay"/></svg></button>
    <select aria-label="${view} layer"><option>${kind}</option></select>
    <button class="raise" aria-label="Choose layer"><svg class="tri"><use href="#dn"/></svg></button>
    <button class="raise" aria-label="Favourite"><svg width="12" height="12"><use href="#star"/></svg></button>
    <input value="${view}" aria-label="View title">
    <button class="raise" aria-label="Choose view"><svg class="tri"><use href="#dn"/></svg></button>
    <button class="raise" aria-label="Close view" style="margin-left:1px"><svg width="9" height="9"><use href="#xx"/></svg></button>
    <button class="raise me-0" aria-label="Maximize view" style="background:${color}"><svg class="tri"><use href="#up"/></svg></button>`;
});
// Unit grid of the Blue view: 13.45 px per cm, origin at (445.5, 512.5).
let grid = '', labels = '';
for (let k = -12; k <= 19; k++) { const x = Math.floor(445.5 + 13.45 * k) + .5; grid += `M${x} 398v225`; }
for (let k = -8; k <= 8; k++) {
  const y = Math.floor(512.5 - 13.45 * k) + .5;
  grid += `M276 ${y}h434`;
  labels += `<text x="278" y="${k === 8 ? 407 : Math.round(512 - 13.45 * k)}">${k}</text>`;
}
for (const k of [-12,-10,-8,-6,-4,-2,0,1,2,3,4,5,6,7,8,9,10,11,12,14,15,16,18])
  labels += `<text x="${Math.round(446 + 13.45 * k) + (k < -9 ? 1 : 0)}" y="622">${k}</text>`;
document.getElementById('blueGrid').innerHTML = `<path fill="none" stroke="#000" stroke-opacity=".22" stroke-dasharray="1 2" d="${grid}"/>`;
document.getElementById('blueLabels').innerHTML = labels;
</script>
<script src="https://cdn.jsdelivr.net/npm/bootstrap@5.3.0/dist/js/bootstrap.bundle.min.js"></script>
</body>
</html>
